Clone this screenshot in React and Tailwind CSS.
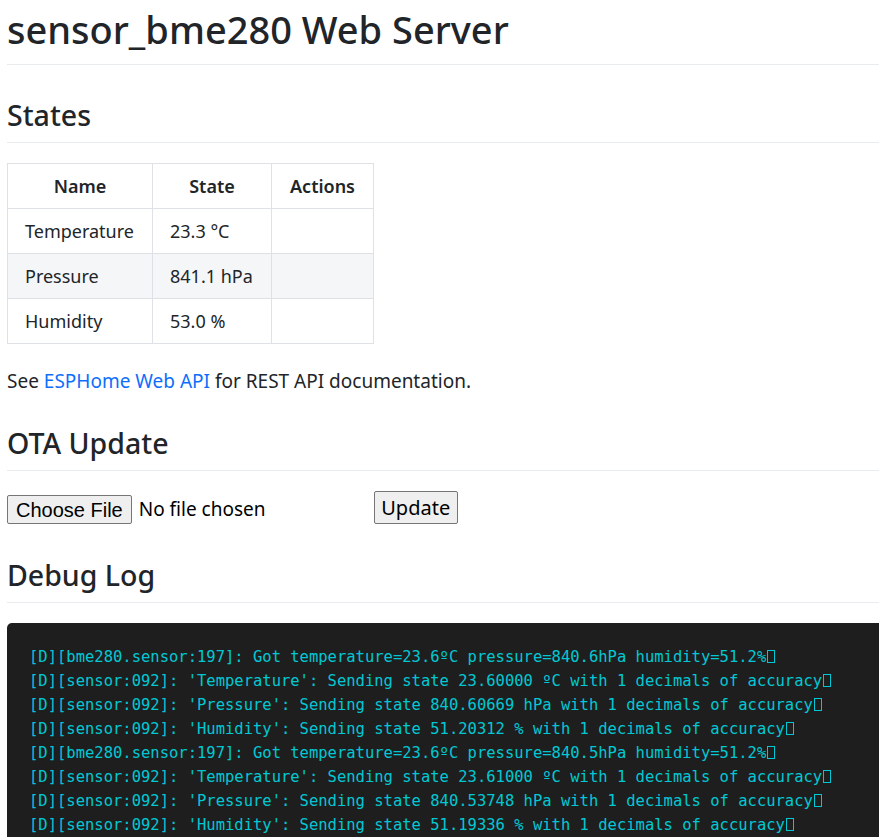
import React from 'react';

const logLines = [
  "[D][bme280.sensor:197]: Got temperature=23.6ºC pressure=840.6hPa humidity=51.2%",
  "[D][sensor:092]: 'Temperature': Sending state 23.60000 ºC with 1 decimals of accuracy",
  "[D][sensor:092]: 'Pressure': Sending state 840.60669 hPa with 1 decimals of accuracy",
  "[D][sensor:092]: 'Humidity': Sending state 51.20312 % with 1 decimals of accuracy",
  "[D][bme280.sensor:197]: Got temperature=23.6ºC pressure=840.5hPa humidity=51.2%",
  "[D][sensor:092]: 'Temperature': Sending state 23.61000 ºC with 1 decimals of accuracy",
  "[D][sensor:092]: 'Pressure': Sending state 840.53748 hPa with 1 decimals of accuracy",
  "[D][sensor:092]: 'Humidity': Sending state 51.19336 % with 1 decimals of accuracy",
];

const states = [
  { name: 'Temperature', value: '23.3 °C' },
  { name: 'Pressure', value: '841.1 hPa' },
  { name: 'Humidity', value: '53.0 %' },
];

// missing-glyph box printed where the ESC colour code sits
const EscBox = () => (
  <span className="inline-block w-[8px] h-[13px] border border-[#00c8d4] align-[-1px] ml-[1px]" />
);

const Heading = ({ children, className = '' }) => (
  <h2 className={`text-[28.5px] leading-[38px] font-medium border-b border-[#e9ecef] pb-[8px] ${className}`}>
    {children}
  </h2>
);

export default function App() {
  return (
    <div className="min-h-screen bg-white text-[#212529] pl-[7px] overflow-hidden font-['Noto_Sans',sans-serif]">
      <h1 className="text-[38px] leading-[48px] font-medium mt-[5px] pb-[11px] border-b border-[#e9ecef]">
        sensor_bme280 Web Server
      </h1>

      <Heading className="mt-[31px]">States</Heading>

      <table className="mt-[20px] border-collapse text-[18px]">
        <thead>
          <tr className="h-[45px]">
            <th className="w-[145px] border border-[#dee2e6] font-semibold text-center">Name</th>
            <th className="w-[119px] border border-[#dee2e6] font-semibold text-center">State</th>
            <th className="w-[102px] border border-[#dee2e6] font-semibold text-center">Actions</th>
          </tr>
        </thead>
        <tbody>
          {states.map((s, i) => (
            <tr key={s.name} className={`h-[45px] ${i === 1 ? 'bg-[#f5f6f8]' : ''}`}>
              <td className="border border-[#dee2e6] pl-[17px]">{s.name}</td>
              <td className="border border-[#dee2e6] pl-[17px]">{s.value}</td>
              <td className="border border-[#dee2e6]"></td>
            </tr>
          ))}
        </tbody>
      </table>

      <p className="mt-[24px] text-[19px] leading-[27px]">
        See <a href="#" className="text-[#0d6efd]">ESPHome Web API</a> for REST API documentation.
      </p>

      <Heading className="mt-[29px]">OTA Update</Heading>

      <form className="mt-[20px] flex items-end">
        <button type="button" className="h-[29px] px-[8px] bg-[#efefef] border border-[#767676] rounded-[2px] text-[20px] leading-none text-black font-['Liberation_Sans',Arial,sans-serif]">
          Choose File
        </button>
        <span className="ml-[7px] w-[235px] text-[19px] leading-[29px] text-black">No file chosen</span>
        <button type="button" className="h-[33px] w-[84px] bg-[#efefef] border border-[#767676] rounded-[2px] text-[20px] leading-none text-black">
          Update
        </button>
      </form>

      <Heading className="mt-[32px]">Debug Log</Heading>

      <pre className="mt-[20px] bg-[#1e1e1e] rounded-tl-[5px] pl-[22px] pt-[22px] pb-[20px] text-[#00c8d4] text-[15.5px] leading-[24px] font-['DejaVu_Sans_Mono',monospace] whitespace-pre">
        {logLines.map((line, i) => (
          <div key={i}>
            {line}
            <EscBox />
          </div>
        ))}
      </pre>
    </div>
  );
}
